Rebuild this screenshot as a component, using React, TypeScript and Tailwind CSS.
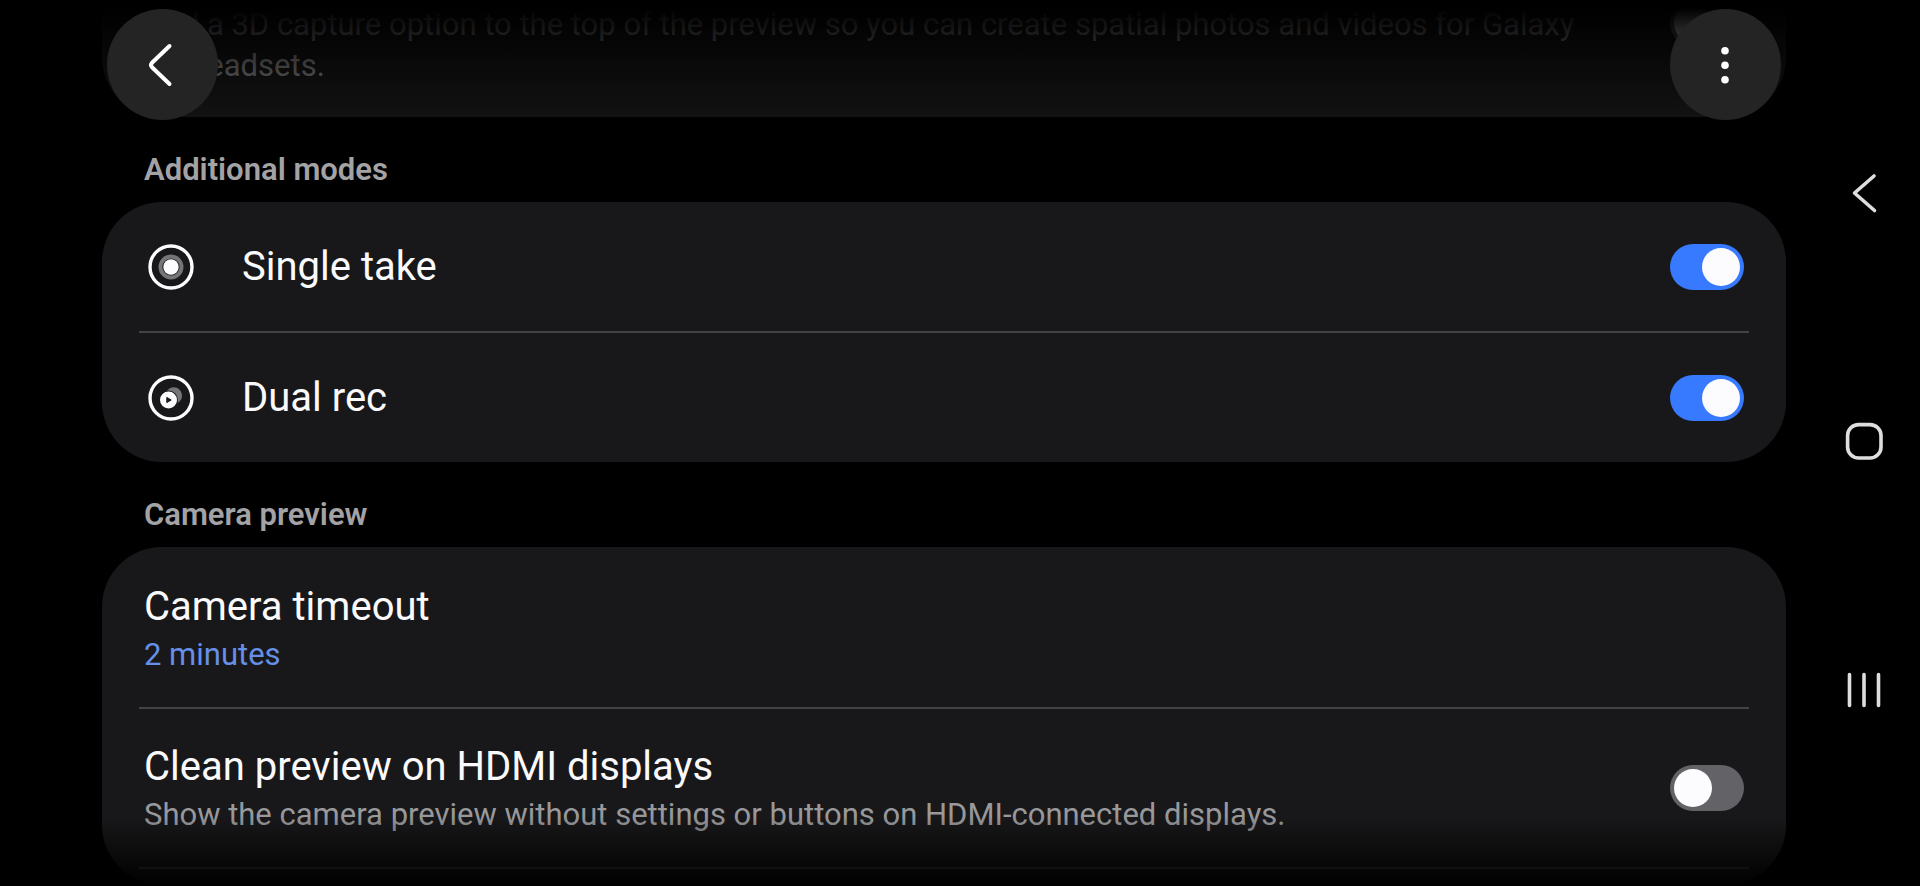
import React, { FC, ReactNode, useState } from 'react';

const Fade: FC<{ className: string }> = ({ className }) => (
  <div className={`pointer-events-none absolute inset-x-0 ${className}`} />
);

const Switch: FC<{ id: string; defaultOn?: boolean }> = ({ id, defaultOn = false }) => {
  const [on, setOn] = useState(defaultOn);
  return (
    <input
      id={id}
      type="checkbox"
      role="switch"
      checked={on}
      onChange={(e) => setOn(e.target.checked)}
      className="flex h-[46px] w-[74px] shrink-0 appearance-none items-center rounded-full bg-[#636267] px-1 before:size-[38px] before:rounded-full before:bg-[#fcfcff] before:content-[''] checked:justify-end checked:bg-[#387aff]"
    />
  );
};

const SectionTitle: FC<{ children: ReactNode }> = ({ children }) => (
  <h2 className="px-[42px] pt-[33px] pb-3 text-[31px] leading-10 font-semibold text-[#a3a3a5]">{children}</h2>
);

const Divider = () => <hr className="mx-[37px] h-[2px] border-0 bg-[#424244]" />;

const ModeRow: FC<{ id: string; title: string; icon: ReactNode }> = ({ id, title, icon }) => (
  <div className="flex h-[129px] items-center pr-[42px] pl-[46px]">
    {icon}
    <label htmlFor={id} className="ml-12 flex-1 text-[40px] leading-12 text-[#fafafc]">
      {title}
    </label>
    <Switch id={id} defaultOn />
  </div>
);

const SingleTakeIcon = () => (
  <svg viewBox="0 0 46 46" className="size-[46px]" fill="none">
    <circle cx="23" cy="23" r="21" stroke="#fcfcff" strokeWidth="3.4" />
    <circle cx="23" cy="23" r="12.5" fill="#757577" />
    <circle cx="23" cy="23" r="8.6" fill="#18181a" />
    <circle cx="23" cy="23" r="7.7" fill="#fcfcff" />
  </svg>
);

const DualRecIcon = () => (
  <svg viewBox="0 0 46 46" className="size-[46px]" fill="none">
    <circle cx="23" cy="23" r="21" stroke="#fcfcff" strokeWidth="3.4" />
    <circle cx="25.8" cy="20.5" r="8.3" fill="#757577" />
    <circle cx="20.5" cy="25" r="9.4" fill="#18181a" />
    <circle cx="20.5" cy="25" r="8.5" fill="#fcfcff" />
    <path d="M18.8 22.4v5.2l4.4-2.6z" fill="#18181a" stroke="#18181a" strokeLinejoin="round" />
  </svg>
);

const RoundButton: FC<{ label: string; className: string; children: ReactNode }> = ({ label, className, children }) => (
  <button
    aria-label={label}
    className={`absolute top-[9px] flex size-[111px] items-center justify-center rounded-full bg-[#242424] ${className}`}
  >
    {children}
  </button>
);

const NavBar = () => (
  <nav className="flex w-[134px] shrink-0 flex-col items-center justify-between pt-[169px] pb-[171px] pl-[22px]">
    <button aria-label="Back" className="size-12">
      <svg viewBox="0 0 48 48" className="size-12" fill="none" stroke="#dedede" strokeWidth="3.6" strokeLinecap="round" strokeLinejoin="round">
        <path d="M34 7 14.5 24 34.5 41.5" />
      </svg>
    </button>
    <button aria-label="Home" className="size-12">
      <svg viewBox="0 0 48 48" className="size-12" fill="none" stroke="#dedede" strokeWidth="3.6">
        <rect x="7.6" y="6.6" width="33.4" height="33.4" rx="11" />
      </svg>
    </button>
    <button aria-label="Recents" className="size-12">
      <svg viewBox="0 0 48 48" className="size-12" fill="none" stroke="#dedede" strokeWidth="3.6" strokeLinecap="round">
        <path d="M9.5 7.5v31M24 7.5v31M38.5 7.5v31" />
      </svg>
    </button>
  </nav>
);

export default function App() {
  return (
    <div className="flex h-screen overflow-hidden bg-black pl-[102px] font-['Roboto',sans-serif]">
      <main className="relative min-w-0 flex-1 overflow-hidden">
        <section className="flex h-[117px] items-start rounded-b-[60px] bg-[#18181a] px-[42px]">
          <label htmlFor="capture" className="flex-1 pt-1 pr-20 text-[31px] leading-[41px] text-[#99999c]">
            Add a 3D capture option to the top of the preview so you can create spatial photos and videos for Galaxy XR headsets.
          </label>
          <Switch id="capture" />
        </section>

        <SectionTitle>Additional modes</SectionTitle>
        <section className="rounded-[60px] bg-[#18181a]">
          <ModeRow id="single-take" title="Single take" icon={<SingleTakeIcon />} />
          <Divider />
          <ModeRow id="dual-rec" title="Dual rec" icon={<DualRecIcon />} />
        </section>

        <SectionTitle>Camera preview</SectionTitle>
        <section className="rounded-[60px] bg-[#18181a] pb-4">
          <button className="block w-full px-[42px] pt-9 pb-7 text-left">
            <span className="block text-[40px] leading-12 text-[#fafafc]">Camera timeout</span>
            <span className="block text-[31px] leading-12 text-[#668fe8]">2 minutes</span>
          </button>
          <Divider />
          <div className="flex items-center px-[42px]">
            <label htmlFor="hdmi" className="flex-1 pt-[34px] pb-7">
              <span className="block text-[40px] leading-12 text-[#fafafc]">Clean preview on HDMI displays</span>
              <span className="block text-[31px] leading-12 text-[#99999c]">
                Show the camera preview without settings or buttons on HDMI-connected displays.
              </span>
            </label>
            <Switch id="hdmi" />
          </div>
          <Divider />
        </section>

        {/* Content fades out under the top and bottom edges */}
        <Fade className="top-0 h-[155px] bg-linear-to-b from-black from-5% to-transparent" />
        <Fade className="bottom-0 h-[70px] bg-linear-to-t from-black to-transparent" />

        <RoundButton label="Navigate up" className="left-[5px]">
          <svg viewBox="0 0 48 48" className="size-12" fill="none" stroke="#fff" strokeWidth="4" strokeLinecap="round" strokeLinejoin="round">
            <path d="M30.5 5 13 21.8q-2 2.2 0 4.4L30.5 43" />
          </svg>
        </RoundButton>
        <RoundButton label="More options" className="right-[5px]">
          <svg viewBox="0 0 48 48" className="size-12" fill="#fff">
            <circle cx="23" cy="9.7" r="3.8" />
            <circle cx="23" cy="24.2" r="3.8" />
            <circle cx="23" cy="38.7" r="3.8" />
          </svg>
        </RoundButton>
      </main>
      <NavBar />
    </div>
  );
}
